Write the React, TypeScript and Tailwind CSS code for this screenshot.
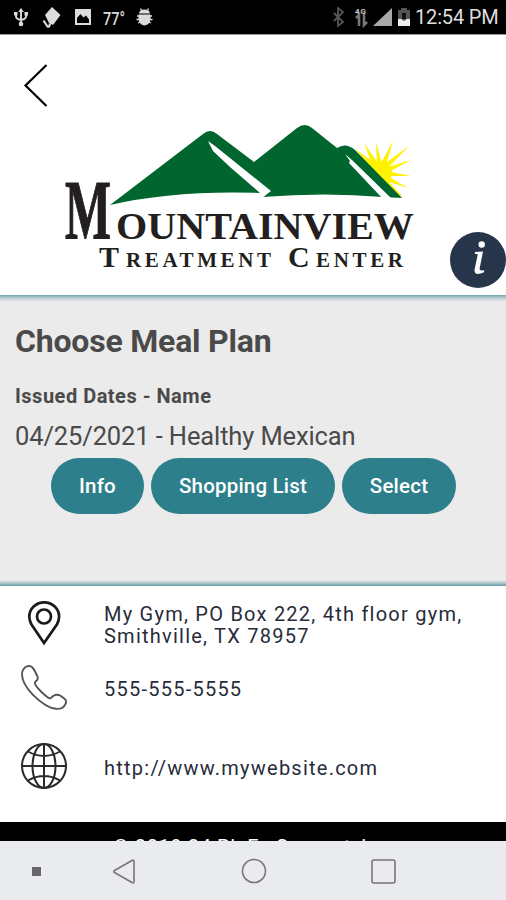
import type { ReactNode } from 'react'

function StatusBar() {
  return (
    <header className="flex h-[34px] shrink-0 items-center justify-between bg-black text-[#dedede]">
      <svg width="160" height="34" fill="none" stroke="#dcdcdc" strokeWidth="1.9">
        <path d="M21 9v16M16 13v3.500q0 2.500 5 3.500q5-1 5-3.500v-3.500" />
        <path d="M18.200 12l2.800-4 2.800 4zM14 12h3.500v3.500H14zM24.500 12h3.500v3.500h-3.500z" fill="#dcdcdc" stroke="none" />
        <circle cx="21" cy="24" r="2.300" fill="#dcdcdc" stroke="none" />
        <path d="M52 7l8.500 8-7.500 10-4-2-4-8z" fill="#dcdcdc" stroke="none" />
        <path d="M43.500 20.500l4 6q2 1 2.500-3" strokeWidth="2.2" />
        <path d="M75 9h16v16H75z" fill="#dcdcdc" stroke="none" />
        <path d="M77 23v-5l3.500-4 3 3.500 2.500-2 3 4v3.500z" fill="#000" stroke="none" />
        <text x="103" y="24.500" fontFamily="Roboto, sans-serif" fontSize="18" fontWeight="500" fill="#dcdcdc" stroke="none" textLength="22" lengthAdjust="spacingAndGlyphs">77°</text>
        <path d="M139 13.500q.5-4 5.500-4t5.500 4zM138.500 14.500h12v4q0 6-6 7q-6-1-6-7z" fill="#dcdcdc" stroke="none" />
        <path d="M140.500 8.500l1.500 3M148.500 8.500l-1.500 3M137 16h15M136.500 19.500h16M138 23l3-1M151 23l-3-1" strokeWidth="1.300" />
      </svg>
      <div className="flex items-center pr-2">
        <svg width="86" height="34" fill="none">
          <path d="M5 13l9 9-5 4V8l5 4-9 9" stroke="#555" strokeWidth="1.800" />
          <text x="26" y="14" fontFamily="Roboto, sans-serif" fontSize="8" fontWeight="700" fill="#ccc" textLength="11">4G</text>
          <path d="M30 26V15l-3 3M35 14v11l3-3" stroke="#777" strokeWidth="2.600" />
          <path d="M44 26L63 8v18z" fill="#aaa" />
          <path d="M72 8h6v2h3v16H69V10h3z" fill="#555" />
          <path d="M73 13h4v6h-4z" fill="#111" />
          <path d="M69 19h3l3 2 3-2h3v7H69z" fill="#eee" />
        </svg>
        <span className="w-[83px] whitespace-nowrap text-[20px] leading-[36px] tracking-[-0.15px]">12:54 PM</span>
      </div>
    </header>
  )
}

function Logo() {
  return (
    <svg className="mx-auto" width="366" height="156" viewBox="56 118 366 156">
      <g fill="#fff200">
        <circle cx="381" cy="173" r="11" />
        <path d="M364 143l9 24 5-4zM376 142l1 23 5-1zM393 141l-12 22 5 2zM409 146l-26 19 3 5zM411 160l-26 8 2 5zM411 176l-25-5 0 5zM408 188l-22-13-3 5z" />
        <path d="M355 149l20 14 14 19 13 14-6 0z" />
      </g>
      <path
        fill="#00652e"
        d="M110 205L203 134q7-6 14 0L254 162L297 128q8-6 15 0L337 148q9-6 18 2L402 198L383 197Q325 192 262 197L260 193Q175 190 110 205z"
      />
      <g fill="#fff">
        <path d="M208 141l7 5 15 12 41 33-9 7-2-5-30-26-17-16z" />
        <path d="M345 154l7 6 40 39h-9l-34-36 1-2z" />
      </g>
      <g fill="#231f20" fontFamily="'Liberation Serif', serif" fontWeight="700">
        <text x="65" y="238.500" fontSize="85" stroke="#231f20" strokeWidth="1.200" textLength="46" lengthAdjust="spacingAndGlyphs">M</text>
        <text x="116" y="239" fontSize="38.500" textLength="298" lengthAdjust="spacingAndGlyphs">OUNTAINVIEW</text>
        <text x="99" y="267" fontSize="30" textLength="20" lengthAdjust="spacingAndGlyphs">T</text>
        <text x="126" y="267" fontSize="21" textLength="149" letterSpacing="4">REATMENT</text>
        <text x="288" y="267" fontSize="30">C</text>
        <text x="316" y="267" fontSize="21" textLength="91" letterSpacing="4">ENTER</text>
      </g>
    </svg>
  )
}

function PillButton({ children, className }: { children: ReactNode; className: string }) {
  return (
    <button className={`h-14 rounded-full bg-[#2d7f8b] text-[20.5px] font-medium whitespace-nowrap text-white ${className}`}>
      {children}
    </button>
  )
}

function ContactRow({ icon, children, className }: { icon: ReactNode; children: ReactNode; className: string }) {
  return (
    <div className={`flex items-center ${className}`}>
      <div className="flex w-[88px] shrink-0 justify-center">{icon}</div>
      <div className="pl-4 text-[20px] leading-[22px] tracking-[1.24px] whitespace-nowrap text-[#282c39]">{children}</div>
    </div>
  )
}

const pinIcon = (
  <svg width="48" height="48" fill="none" stroke="#1b1b1b" strokeWidth="2.700">
    <path d="M24 42L11.500 23.500Q9.300 19.500 9.300 15.700a14.900 14.400 0 0 1 29.800 0q0 3.800-2.200 7.800z" />
    <circle cx="24" cy="15.500" r="7" />
  </svg>
)

const phoneIcon = (
  <svg width="48" height="48" fill="none" stroke="#555" strokeWidth="1.900" strokeLinejoin="round">
    <path d="M8.500 .9q-6.500 1.600-6.500 8.600q0 9 11 20.300q13 13 23 14q7 .7 9.500-5q1.500-3-1-5l-4-3q-3.500-2-7 0l-3 2.500q-2 .5-9-6.300q-6.500-6.500-6.500-8.500q-.5-1.500 1.700-3q2-2 .3-5l-3-6q-2-3.600-5.500-3.600z" />
  </svg>
)

const globeIcon = (
  <svg className="overflow-visible" width="48" height="48" fill="none" stroke="#2b2b2b" strokeWidth="2">
    <circle cx="24" cy="22" r="22" />
    <ellipse cx="24" cy="22" rx="11.500" ry="22" />
    <path d="M24 0v44M2 22h44M8 7.500q16 9 32 0M8 36.500q16-9 32 0" />
  </svg>
)

export default function App() {
  return (
    <div className="flex h-[900px] w-[506px] flex-col overflow-hidden bg-white font-['Roboto',sans-serif]">
      <StatusBar />

      <section className="relative h-[261px] shrink-0 border-t border-[#999]">
        <div className="flex h-[83px] items-start pt-[28px] pl-[22px]">
          <svg width="28" height="46" fill="none" stroke="#000" strokeWidth="2.200">
            <path d="M24.500 2L3.500 22.500 24.500 43" />
          </svg>
        </div>
        <div className="flex w-[478px]">
          <Logo />
        </div>
        <button className="absolute top-[197px] right-0 size-14 rounded-full bg-[#27354a]">
          <svg width="56" height="56" fill="#fff">
            <circle cx="31.700" cy="12.500" r="3.200" />
            <path d="M25 20l8-.500L29.500 37q0 2 4.700 1.200l-.2 2q-4 2-7 1.800q-3-.5-2.400-4.500L27.800 22.300l-3-.500z" />
          </svg>
        </button>
      </section>

      <main className="flex h-[291px] shrink-0 flex-col bg-[#ebebeb] text-[#4a4a4a]">
        <div className="h-[7px] shrink-0 bg-linear-to-b from-[#6ea5ac] via-[#bed1d4] via-45% to-[#ebebeb]" />
        <div className="grow px-[15px] pt-[19px]">
          <h1 className="text-[32px] leading-[40px] font-bold tracking-[-0.2px]">Choose Meal Plan</h1>
          <h2 className="mt-[23px] text-[20px] leading-[24px] font-bold tracking-[0.5px]">Issued Dates - Name</h2>
          <p className="mt-[13px] text-[25.500px] leading-[30px] tracking-[-0.12px]">04/25/2021 - Healthy Mexican</p>
          <div className="mt-[7px] flex gap-[7px] pl-9">
            <PillButton className="w-[93px] tracking-[0.2px]">Info</PillButton>
            <PillButton className="w-[184px] tracking-[0.2px]">Shopping List</PillButton>
            <PillButton className="w-[114px] tracking-[0.2px]">Select</PillButton>
          </div>
        </div>
        <div className="h-[6px] shrink-0 bg-linear-to-t from-[#5f9ba3] via-[#b0c9cc] via-50% to-[#ebebeb]" />
      </main>

      <section className="h-[236px] shrink-0 pt-[11px]">
        <ContactRow className="h-[56px]" icon={pinIcon}>
          My Gym, PO Box 222, 4th floor gym,
          <br />
          Smithville, TX 78957
        </ContactRow>
        <ContactRow className="h-[72px]" icon={phoneIcon}>555-555-5555</ContactRow>
        <ContactRow className="h-[86px]" icon={globeIcon}>http://www.mywebsite.com</ContactRow>
      </section>

      <footer className="h-[19px] shrink-0 overflow-hidden bg-black pt-[13px] pl-[113px] text-[20px] leading-[24px] tracking-[0.6px] whitespace-nowrap text-white">
        © 2019 24 Pl. En Support, l
      </footer>

      <nav className="h-[59px] shrink-0 bg-[#e9ebee]">
        <svg width="506" height="59" fill="none" stroke="#777" strokeWidth="1.600">
          <path d="M32 26h9v9h-9z" fill="#666" stroke="none" />
          <path d="M132 19.500q2-1 2 1v20q0 2-2 1l-17.500-10q-1.500-1 0-2z" />
          <circle cx="254" cy="30" r="11.500" />
          <rect x="372" y="19" width="23" height="23" rx="2" />
        </svg>
      </nav>
    </div>
  )
}
